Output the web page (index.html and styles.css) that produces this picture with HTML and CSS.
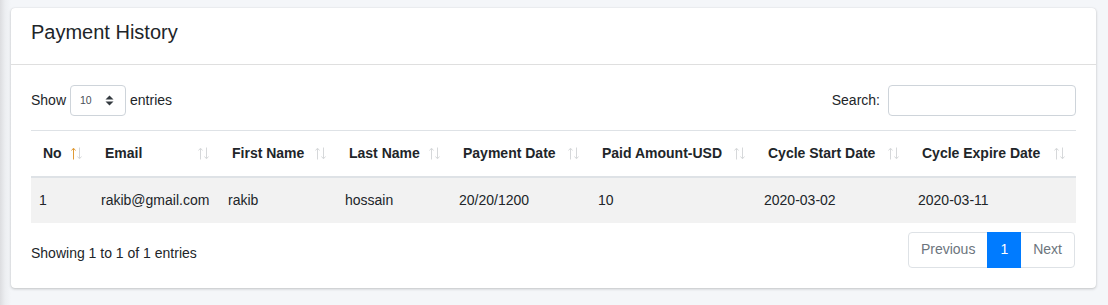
FILE: index.html
```html
<!DOCTYPE html>
<html>
<head>
<meta charset="utf-8">
<link rel="stylesheet" href="styles.css">
</head>
<body>
<div class="wrap">
  <div class="card">
    <div class="card-header">
      <h3 class="card-title">Payment History</h3>
    </div>
    <div class="card-body">
      <div class="top-row">
        <div class="length">
          <span>Show</span>
          <div class="select">
            <span class="select-val">10</span>
            <svg class="select-icon" width="9" height="11" viewBox="0 0 9 11"><path d="M0.5 4.5 L4.5 0.5 L8.5 4.5 Z M0.5 6.5 L8.5 6.5 L4.5 10.5 Z" fill="#343a40"/></svg>
          </div>
          <span>entries</span>
        </div>
        <div class="search">
          <span>Search:</span>
          <div class="input"></div>
        </div>
      </div>
      <table class="data">
        <colgroup>
          <col style="width:62px"><col style="width:127px"><col style="width:117px"><col style="width:114px">
          <col style="width:139px"><col style="width:166px"><col style="width:154px"><col style="width:166px">
        </colgroup>
        <thead>
          <tr>
            <th>No<svg class="sort" width="11" height="13" viewBox="0 0 11 13"><path class="up active" d="M2.5 1.5 V12.5 M0.5 3.5 L2.5 1.2 L4.5 3.5"/><path class="down" d="M8.5 0.5 V11.5 M6.5 9.5 L8.5 11.8 L10.5 9.5"/></svg></th>
            <th>Email<svg class="sort" width="11" height="13" viewBox="0 0 11 13"><path class="up" d="M2.5 1.5 V12.5 M0.5 3.5 L2.5 1.2 L4.5 3.5"/><path class="down" d="M8.5 0.5 V11.5 M6.5 9.5 L8.5 11.8 L10.5 9.5"/></svg></th>
            <th>First Name<svg class="sort" width="11" height="13" viewBox="0 0 11 13"><path class="up" d="M2.5 1.5 V12.5 M0.5 3.5 L2.5 1.2 L4.5 3.5"/><path class="down" d="M8.5 0.5 V11.5 M6.5 9.5 L8.5 11.8 L10.5 9.5"/></svg></th>
            <th>Last Name<svg class="sort" width="11" height="13" viewBox="0 0 11 13"><path class="up" d="M2.5 1.5 V12.5 M0.5 3.5 L2.5 1.2 L4.5 3.5"/><path class="down" d="M8.5 0.5 V11.5 M6.5 9.5 L8.5 11.8 L10.5 9.5"/></svg></th>
            <th>Payment Date<svg class="sort" width="11" height="13" viewBox="0 0 11 13"><path class="up" d="M2.5 1.5 V12.5 M0.5 3.5 L2.5 1.2 L4.5 3.5"/><path class="down" d="M8.5 0.5 V11.5 M6.5 9.5 L8.5 11.8 L10.5 9.5"/></svg></th>
            <th>Paid Amount-USD<svg class="sort" width="11" height="13" viewBox="0 0 11 13"><path class="up" d="M2.5 1.5 V12.5 M0.5 3.5 L2.5 1.2 L4.5 3.5"/><path class="down" d="M8.5 0.5 V11.5 M6.5 9.5 L8.5 11.8 L10.5 9.5"/></svg></th>
            <th>Cycle Start Date<svg class="sort" width="11" height="13" viewBox="0 0 11 13"><path class="up" d="M2.5 1.5 V12.5 M0.5 3.5 L2.5 1.2 L4.5 3.5"/><path class="down" d="M8.5 0.5 V11.5 M6.5 9.5 L8.5 11.8 L10.5 9.5"/></svg></th>
            <th>Cycle Expire Date<svg class="sort" width="11" height="13" viewBox="0 0 11 13"><path class="up" d="M2.5 1.5 V12.5 M0.5 3.5 L2.5 1.2 L4.5 3.5"/><path class="down" d="M8.5 0.5 V11.5 M6.5 9.5 L8.5 11.8 L10.5 9.5"/></svg></th>
          </tr>
        </thead>
        <tbody>
          <tr>
            <td>1</td>
            <td>rakib@gmail.com</td>
            <td>rakib</td>
            <td>hossain</td>
            <td>20/20/1200</td>
            <td>10</td>
            <td>2020-03-02</td>
            <td>2020-03-11</td>
          </tr>
        </tbody>
      </table>
      <div class="bottom-row">
        <div class="info">Showing 1 to 1 of 1 entries</div>
        <ul class="pagination">
          <li class="page-item disabled first">Previous</li>
          <li class="page-item active">1</li>
          <li class="page-item disabled last">Next</li>
        </ul>
      </div>
    </div>
  </div>
</div>
</body>
</html>
```

FILE: styles.css
```css
* { box-sizing: border-box; }

html, body {
  margin: 0;
  padding: 0;
  height: 100%;
}

body {
  font-family: "Liberation Sans", Arial, sans-serif;
  font-size: 14px;
  line-height: 21px;
  color: #212529;
  background: #f4f6f9;
}

.wrap {
  height: 100%;
  padding: 8px 12px 0 11px;
  background: linear-gradient(to right, #dcdde0 0px, #eceef1 5px, #f4f6f9 11px);
}

.card {
  background: #fff;
  border-radius: 4px;
  box-shadow: 0 0 1px rgba(0, 0, 0, 0.125), 0 1px 3px rgba(0, 0, 0, 0.2);
}

.card-header {
  padding: 12px 20px;
  border-bottom: 1px solid rgba(0, 0, 0, 0.125);
}

.card-title {
  margin: 0 0 8px 0;
  font-size: 20px;
  line-height: 24px;
  font-weight: 400;
  color: #212529;
}

.card-body {
  padding: 20px 21px 20px 20px;
}

.top-row {
  display: flex;
  justify-content: space-between;
  align-items: center;
  height: 31px;
  margin-right: -1px;
}

.length {
  display: flex;
  align-items: center;
  gap: 4px;
}

.select {
  width: 56px;
  height: 31px;
  border: 1px solid #ced4da;
  border-radius: 4px;
  display: flex;
  align-items: center;
  justify-content: space-between;
  padding: 0 11px 0 9px;
  font-size: 10.5px;
  color: #495057;
}

.select-icon { display: block; }

.search {
  display: flex;
  align-items: center;
  gap: 8px;
}

.input {
  width: 188px;
  height: 31px;
  border: 1px solid #ced4da;
  border-radius: 4px;
}

.data {
  width: calc(100% + 1px);
  margin-top: 14px;
  border-collapse: collapse;
  table-layout: fixed;
}

.data th {
  position: relative;
  text-align: left;
  font-weight: 700;
  padding: 12px 30px 12px 12px;
  border-top: 1px solid #dee2e6;
  border-bottom: 2px solid #dee2e6;
  white-space: nowrap;
}

.data td {
  padding: 12px 8px;
  border-top: 1px solid #dee2e6;
  background: #f2f2f2;
  white-space: nowrap;
}

.sort {
  position: absolute;
  right: 11px;
  top: 16px;
  fill: none;
}

.sort path {
  stroke: #d6d8da;
  stroke-width: 1;
}

.sort path.active {
  stroke: #e09a35;
}

.bottom-row {
  display: flex;
  justify-content: space-between;
  align-items: center;
  margin-top: 9px;
}

.info {
  padding-top: 8px;
}

.pagination {
  display: flex;
  list-style: none;
  margin: 0;
  padding: 0;
}

.page-item {
  padding: 8px 12px;
  line-height: 17.5px;
  border: 1px solid #dee2e6;
  margin-left: -1px;
  color: #6c757d;
  background: #fff;
}

.page-item.first {
  margin-left: 0;
  border-radius: 4px 0 0 4px;
}

.page-item.last {
  border-radius: 0 4px 4px 0;
}

.page-item.active {
  background: #007bff;
  border-color: #007bff;
  color: #fff;
  position: relative;
  z-index: 1;
}
```
